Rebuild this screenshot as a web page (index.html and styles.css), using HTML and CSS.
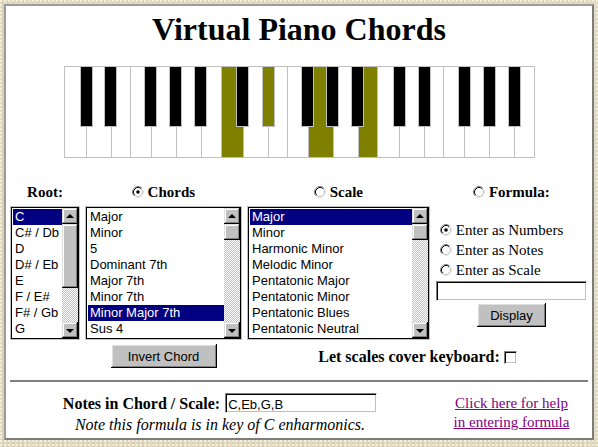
FILE: index.html
```html
<!DOCTYPE html>
<html lang="en">
<head>
<meta charset="utf-8">
<title>Virtual Piano Chords</title>
<link rel="stylesheet" href="styles.css">
</head>
<body>
<div class="panel">
  <h1 class="title">Virtual Piano Chords</h1>

  <svg class="keyboard" width="471" height="92" viewBox="0 0 471 92" shape-rendering="crispEdges" aria-label="Piano keyboard">
    <rect x="0.5" y="0.5" width="470" height="91" fill="#fff" stroke="#c0c0c0"/>
    <rect x="158" y="1" width="21" height="90" fill="#808000"/>
    <rect x="245" y="1" width="24" height="90" fill="#808000"/>
    <rect x="295" y="1" width="18" height="90" fill="#808000"/>
    <path d="M22.5 0V92M47.5 0V92M66.5 0V92M87.5 0V92M112.5 0V92M137.5 0V92M157.5 0V92M179.5 0V92M204.5 0V92M223.5 0V92M244.5 0V92M269.5 0V92M294.5 0V92M313.5 0V92M335.5 0V92M360.5 0V92M379.5 0V92M400.5 0V92M425.5 0V92M450.5 0V92" stroke="#c0c0c0" fill="none"/>
    <g stroke="#c0c0c0" fill="#000">
      <rect x="16.5" y="0.5" width="12" height="60"/>
      <rect x="40.5" y="0.5" width="12" height="60"/>
      <rect x="80.5" y="0.5" width="12" height="60"/>
      <rect x="105.5" y="0.5" width="12" height="60"/>
      <rect x="130.5" y="0.5" width="12" height="60"/>
      <rect x="172.5" y="0.5" width="12" height="60"/>
      <rect x="198.5" y="0.5" width="12" height="60" fill="#808000"/>
      <rect x="237.5" y="0.5" width="12" height="60"/>
      <rect x="262.5" y="0.5" width="12" height="60"/>
      <rect x="287.5" y="0.5" width="12" height="60"/>
      <rect x="329.5" y="0.5" width="12" height="60"/>
      <rect x="354.5" y="0.5" width="12" height="60"/>
      <rect x="394.5" y="0.5" width="12" height="60"/>
      <rect x="419.5" y="0.5" width="12" height="60"/>
      <rect x="444.5" y="0.5" width="12" height="60"/>
    </g>
  </svg>

  <div class="controls">
    <div class="hdr">Root:</div>
    <div class="hdr"><svg class="radio" width="12" height="12" viewBox="0 0 12 12"><circle cx="6" cy="6" r="5" fill="#fff"/><path d="M2.11 9.89A5.5 5.5 0 0 1 9.89 2.11" stroke="#808080" fill="none"/><path d="M9.89 2.11A5.5 5.5 0 0 1 2.11 9.89" stroke="#e8e8e8" fill="none"/><path d="M2.82 9.18A4.5 4.5 0 0 1 9.18 2.82" stroke="#000" fill="none"/><path d="M9.18 2.82A4.5 4.5 0 0 1 2.82 9.18" stroke="#c0c0c0" fill="none"/><circle cx="6" cy="6" r="1.8" fill="#000"/></svg> Chords</div>
    <div class="hdr"><svg class="radio" width="12" height="12" viewBox="0 0 12 12"><circle cx="6" cy="6" r="5" fill="#fff"/><path d="M2.11 9.89A5.5 5.5 0 0 1 9.89 2.11" stroke="#808080" fill="none"/><path d="M9.89 2.11A5.5 5.5 0 0 1 2.11 9.89" stroke="#e8e8e8" fill="none"/><path d="M2.82 9.18A4.5 4.5 0 0 1 9.18 2.82" stroke="#000" fill="none"/><path d="M9.18 2.82A4.5 4.5 0 0 1 2.82 9.18" stroke="#c0c0c0" fill="none"/></svg> Scale</div>
    <div class="hdr"><svg class="radio" width="12" height="12" viewBox="0 0 12 12"><circle cx="6" cy="6" r="5" fill="#fff"/><path d="M2.11 9.89A5.5 5.5 0 0 1 9.89 2.11" stroke="#808080" fill="none"/><path d="M9.89 2.11A5.5 5.5 0 0 1 2.11 9.89" stroke="#e8e8e8" fill="none"/><path d="M2.82 9.18A4.5 4.5 0 0 1 9.18 2.82" stroke="#000" fill="none"/><path d="M9.18 2.82A4.5 4.5 0 0 1 2.82 9.18" stroke="#c0c0c0" fill="none"/></svg> Formula:</div>

    <div class="list">
      <ul class="items">
        <li class="sel">C</li>
        <li>C# / Db</li>
        <li>D</li>
        <li>D# / Eb</li>
        <li>E</li>
        <li>F / E#</li>
        <li>F# / Gb</li>
        <li>G</li>
      </ul>
      <div class="sb">
        <span class="sb-btn sb-up"></span>
        <span class="sb-track"><span class="sb-thumb thumb-large"></span></span>
        <span class="sb-btn sb-down"></span>
      </div>
    </div>

    <div class="list">
      <ul class="items">
        <li>Major</li>
        <li>Minor</li>
        <li>5</li>
        <li>Dominant 7th</li>
        <li>Major 7th</li>
        <li>Minor 7th</li>
        <li class="sel">Minor Major 7th</li>
        <li>Sus 4</li>
      </ul>
      <div class="sb">
        <span class="sb-btn sb-up"></span>
        <span class="sb-track"><span class="sb-thumb thumb-small"></span></span>
        <span class="sb-btn sb-down"></span>
      </div>
    </div>

    <div class="list">
      <ul class="items">
        <li class="sel">Major</li>
        <li>Minor</li>
        <li>Harmonic Minor</li>
        <li>Melodic Minor</li>
        <li>Pentatonic Major</li>
        <li>Pentatonic Minor</li>
        <li>Pentatonic Blues</li>
        <li>Pentatonic Neutral</li>
      </ul>
      <div class="sb">
        <span class="sb-btn sb-up"></span>
        <span class="sb-track"><span class="sb-thumb thumb-small"></span></span>
        <span class="sb-btn sb-down"></span>
      </div>
    </div>

    <div class="formula">
      <div class="opt"><svg class="radio" width="12" height="12" viewBox="0 0 12 12"><circle cx="6" cy="6" r="5" fill="#fff"/><path d="M2.11 9.89A5.5 5.5 0 0 1 9.89 2.11" stroke="#808080" fill="none"/><path d="M9.89 2.11A5.5 5.5 0 0 1 2.11 9.89" stroke="#e8e8e8" fill="none"/><path d="M2.82 9.18A4.5 4.5 0 0 1 9.18 2.82" stroke="#000" fill="none"/><path d="M9.18 2.82A4.5 4.5 0 0 1 2.82 9.18" stroke="#c0c0c0" fill="none"/><circle cx="6" cy="6" r="1.8" fill="#000"/></svg> Enter as Numbers</div>
      <div class="opt"><svg class="radio" width="12" height="12" viewBox="0 0 12 12"><circle cx="6" cy="6" r="5" fill="#fff"/><path d="M2.11 9.89A5.5 5.5 0 0 1 9.89 2.11" stroke="#808080" fill="none"/><path d="M9.89 2.11A5.5 5.5 0 0 1 2.11 9.89" stroke="#e8e8e8" fill="none"/><path d="M2.82 9.18A4.5 4.5 0 0 1 9.18 2.82" stroke="#000" fill="none"/><path d="M9.18 2.82A4.5 4.5 0 0 1 2.82 9.18" stroke="#c0c0c0" fill="none"/></svg> Enter as Notes</div>
      <div class="opt"><svg class="radio" width="12" height="12" viewBox="0 0 12 12"><circle cx="6" cy="6" r="5" fill="#fff"/><path d="M2.11 9.89A5.5 5.5 0 0 1 9.89 2.11" stroke="#808080" fill="none"/><path d="M9.89 2.11A5.5 5.5 0 0 1 2.11 9.89" stroke="#e8e8e8" fill="none"/><path d="M2.82 9.18A4.5 4.5 0 0 1 9.18 2.82" stroke="#000" fill="none"/><path d="M9.18 2.82A4.5 4.5 0 0 1 2.82 9.18" stroke="#c0c0c0" fill="none"/></svg> Enter as Scale</div>
      <input class="field field-formula" type="text" value="">
      <button class="btn btn-display" type="button">Display</button>
    </div>

    <div class="invert-cell"><button class="btn btn-invert" type="button">Invert Chord</button></div>
    <div class="cover">Let scales cover keyboard: <span class="checkbox"></span></div>
  </div>

  <div class="rule"></div>

  <div class="bottom">
    <div class="notes">
      <div class="notes-row">
        <span class="notes-label">Notes in Chord / Scale:</span>
        <input class="field field-notes" type="text" value="C,Eb,G,B">
      </div>
      <div class="notes-hint">Note this formula is in key of C enharmonics.</div>
    </div>
    <div class="help"><a class="help-link" href="#">Click here for help<br>in entering formula</a></div>
  </div>
</div>
</body>
</html>
```

FILE: styles.css
```css
html, body {
  margin: 0;
  padding: 0;
}

body {
  background-color: #e2dac1;
  background-image:
    radial-gradient(circle at 1px 1px, rgba(255,255,240,0.55) 0.8px, transparent 1px),
    radial-gradient(circle at 3px 2px, rgba(190,175,150,0.35) 0.8px, transparent 1px);
  background-size: 4px 4px, 5px 3px;
  font-family: "Liberation Serif", "Times New Roman", serif;
  color: #000;
  padding: 4px;
}

.panel {
  box-sizing: border-box;
  width: 590px;
  height: 436px;
  background: #fff;
  border: 2px solid;
  border-color: #9c9c9c #7c7c7c #7c7c7c #9c9c9c;
}

.title {
  margin: 0 0 18px;
  padding-top: 5px;
  font-size: 32px;
  line-height: 37px;
  font-weight: bold;
  text-align: center;
}

.keyboard {
  display: block;
  margin: 0 auto;
}

/* ---------- controls grid ---------- */
.controls {
  display: grid;
  grid-template-columns: 68px 155px 181px 151px;
  column-gap: 7px;
  padding: 25px 0 0 5px;
}

.hdr {
  font-size: 15px;
  font-weight: bold;
  line-height: 18px;
  height: 18px;
  margin-bottom: 6px;
  text-align: center;
  white-space: nowrap;
}

.radio {
  display: inline-block;
  vertical-align: -1px;
}

/* ---------- list boxes ---------- */
.list {
  display: flex;
  box-sizing: border-box;
  height: 132px;
  border: 1px solid #000;
  box-shadow: 0 0 0 1px #c0c0c0;
  background: #fff;
  overflow: hidden;
}

.items {
  flex: 1;
  min-width: 0;
  margin: 0;
  padding: 1px 0 1px 1px;
  list-style: none;
  overflow: hidden;
  font-family: "Liberation Sans", Arial, sans-serif;
  font-size: 13px;
}

.items li {
  height: 16px;
  line-height: 16px;
  padding-left: 2px;
  white-space: nowrap;
}

.items .sel {
  background: #000080;
  color: #fff;
}

.sb {
  width: 16px;
  flex: none;
  display: flex;
  flex-direction: column;
}

.sb-btn {
  height: 16px;
  flex: none;
  display: flex;
  align-items: center;
  justify-content: center;
  background: #c0c0c0;
  box-shadow: inset -1px -1px #000, inset 1px 1px #dfdfdf, inset -2px -2px #808080, inset 2px 2px #fff;
}

.sb-up::after,
.sb-down::after {
  content: "";
  width: 0;
  height: 0;
  border-left: 4px solid transparent;
  border-right: 4px solid transparent;
}

.sb-up::after {
  border-bottom: 4px solid #000;
  margin-top: -1px;
}

.sb-down::after {
  border-top: 4px solid #000;
  margin-top: 1px;
}

.sb-track {
  flex: 1;
  display: block;
  background-color: #fff;
  background-image: repeating-conic-gradient(#c0c0c0 0% 25%, #ffffff 0% 50%);
  background-size: 2px 2px;
}

.sb-thumb {
  display: block;
  background: #c0c0c0;
  box-shadow: inset -1px -1px #000, inset 1px 1px #dfdfdf, inset -2px -2px #808080, inset 2px 2px #fff;
}

.thumb-large { height: 64px; }
.thumb-small { height: 16px; }

/* ---------- formula column ---------- */
.formula {
  padding-top: 13px;
}

.opt {
  height: 20px;
  line-height: 20px;
  font-size: 15px;
  padding-left: 4px;
  white-space: nowrap;
}

.field {
  box-sizing: border-box;
  display: block;
  height: 20px;
  margin: 0;
  padding: 2px 2px 0;
  border: 1px solid;
  border-color: #808080 #fff #fff #808080;
  box-shadow: inset 1px 1px #000, inset -1px -1px #c0c0c0;
  background: #fff;
  font-family: "Liberation Sans", Arial, sans-serif;
  font-size: 13px;
  line-height: 16px;
  color: #000;
  outline: none;
}

.field-formula {
  width: 151px;
  margin-top: 1px;
}

.btn {
  display: block;
  box-sizing: border-box;
  height: 24px;
  padding: 0;
  border: 0;
  background: #c0c0c0;
  box-shadow: inset -1px -1px #000, inset 1px 1px #fff, inset -2px -2px #808080, inset 2px 2px #dfdfdf;
  font-family: "Liberation Sans", Arial, sans-serif;
  font-size: 13px;
  color: #000;
}

.btn-display {
  width: 69px;
  margin: 2px auto 0;
}

.invert-cell {
  grid-column: 2;
  padding-top: 5px;
}

.btn-invert {
  width: 106px;
  margin: 0 auto;
}

.cover {
  grid-column: 3 / span 2;
  padding-top: 9px;
  font-size: 16px;
  font-weight: bold;
  line-height: 18px;
  text-align: center;
  white-space: nowrap;
}

.checkbox {
  display: inline-block;
  box-sizing: border-box;
  width: 13px;
  height: 13px;
  vertical-align: -2px;
  border: 1px solid;
  border-color: #808080 #fff #fff #808080;
  box-shadow: inset 1px 1px #000, inset -1px -1px #c0c0c0;
  background: #fff;
}

/* ---------- bottom ---------- */
.rule {
  height: 2px;
  margin: 12px 4px 0;
  background: #808080;
}

.bottom {
  display: grid;
  grid-template-columns: 418px 151px;
  column-gap: 7px;
  padding-left: 5px;
}

.notes {
  padding-top: 11px;
}

.notes-row {
  display: flex;
  justify-content: center;
  align-items: flex-end;
  gap: 5px;
  height: 20px;
}

.notes-label {
  font-size: 16px;
  font-weight: bold;
  line-height: 17px;
  padding-bottom: 1px;
  white-space: nowrap;
}

.field-notes {
  width: 152px;
}

.notes-hint {
  margin-top: 3px;
  font-size: 16px;
  font-style: italic;
  line-height: 18px;
  text-align: center;
  white-space: nowrap;
}

.help {
  padding-top: 12px;
  text-align: center;
  font-size: 15px;
  line-height: 19px;
}

.help-link {
  color: #800080;
  text-decoration: underline;
}
```
